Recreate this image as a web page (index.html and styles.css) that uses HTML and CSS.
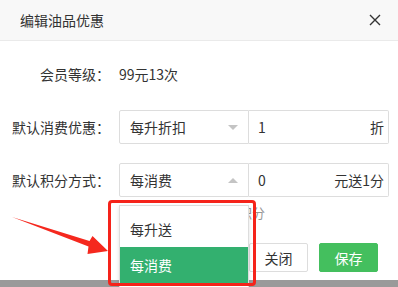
FILE: index.html
```html
<!DOCTYPE html>
<html lang="zh">
<head>
<meta charset="utf-8">
<link rel="stylesheet" href="styles.css">
</head>
<body>
<div class="dialog">
  <div class="header">
    <span class="title">编辑油品优惠</span>
    <svg class="close" width="12" height="12" viewBox="0 0 12 12"><path d="M1 1L11 11M11 1L1 11" stroke="#333" stroke-width="1.4" fill="none"/></svg>
  </div>
  <div class="body">
    <div class="row">
      <div class="label">会员等级：</div>
      <div class="value">99元13次</div>
    </div>
    <div class="row">
      <div class="label">默认消费优惠：</div>
      <div class="select"><span>每升折扣</span><i class="tri down"></i></div>
      <div class="input"><span>1</span><span class="unit">折</span></div>
    </div>
    <div class="row last">
      <div class="label">默认积分方式：</div>
      <div class="select"><span>每消费</span><i class="tri up"></i></div>
      <div class="input"><span>0</span><span class="unit">元送1分</span></div>
    </div>
    <div class="hint">每消费多少元可以送积分</div>
    <div class="footer">
      <button class="btn">关闭</button>
      <button class="btn primary">保存</button>
    </div>
  </div>
</div>
<div class="dropdown">
  <div class="item">每升送</div>
  <div class="item active">每消费</div>
</div>
<div class="mark"></div>
<svg class="arrow" width="398" height="287" viewBox="0 0 398 287"><polygon points="12,217 89.5,241 92.5,236 108,251 87.5,254 88.5,246.5" fill="#f5281e"/></svg>
</body>
</html>
```
FILE: styles.css
```css
html, body {
  margin: 0;
  padding: 0;
}
body {
  width: 398px;
  height: 287px;
  background: #9a9a9a;
  position: relative;
  overflow: hidden;
  font-family: "Noto Sans CJK SC", "Noto Sans", sans-serif;
  font-size: 14px;
  color: #333;
}
.dialog {
  width: 398px;
  height: 280px;
  background: #fff;
}
.header {
  height: 41px;
  box-sizing: border-box;
  background: #f8f8f8;
  border-bottom: 1px solid #eaeaea;
  padding: 0 17px 0 20px;
  display: flex;
  align-items: center;
  justify-content: space-between;
}
.title {
  font-size: 14px;
  color: #333;
}
.close {
  display: block;
}
.body {
  padding-top: 16px;
}
.row {
  display: flex;
  align-items: center;
  height: 34px;
  margin-bottom: 19px;
}
.row.last {
  margin-bottom: 0;
}
.label {
  width: 110px;
  text-align: right;
  margin-right: 9px;
  color: #333;
}
.select {
  width: 130px;
  height: 34px;
  box-sizing: border-box;
  border: 1px solid #ddd;
  border-radius: 2px 0 0 2px;
  display: flex;
  align-items: center;
  justify-content: space-between;
  padding: 0 10px 0 10px;
}
.tri {
  width: 0;
  height: 0;
  border-left: 5px solid transparent;
  border-right: 5px solid transparent;
}
.tri.down {
  border-top: 5px solid #c4c4c4;
}
.tri.up {
  border-bottom: 5px solid #c4c4c4;
}
.input {
  width: 140px;
  height: 34px;
  box-sizing: border-box;
  border: 1px solid #ddd;
  border-left: none;
  border-radius: 0 2px 2px 0;
  display: flex;
  align-items: center;
  justify-content: space-between;
  padding: 0 4px 0 9px;
}
.hint {
  margin-top: 8px;
  padding-left: 122px;
  font-size: 13px;
  line-height: 16px;
  color: #999;
}
.footer {
  display: flex;
  justify-content: flex-end;
  gap: 11px;
  padding-right: 20px;
  margin-top: 22px;
}
.btn {
  width: 59px;
  height: 29px;
  box-sizing: border-box;
  border: 1px solid #ddd;
  border-radius: 2px;
  background: #fff;
  font-family: inherit;
  font-size: 14px;
  color: #333;
  padding: 0;
}
.btn.primary {
  background: #44bf5e;
  border-color: #44bf5e;
  color: #fff;
}
.dropdown {
  position: absolute;
  left: 119px;
  top: 205px;
  width: 130px;
  box-sizing: border-box;
  border: 1px solid #ddd;
  background: #fff;
  padding: 5px 0;
  box-shadow: 0 2px 4px rgba(0,0,0,0.12);
}
.item {
  height: 36px;
  line-height: 36px;
  padding-left: 10px;
  color: #333;
}
.item.active {
  background: #33b06f;
  color: #fff;
}
.mark {
  position: absolute;
  left: 108px;
  top: 200px;
  width: 148px;
  height: 86px;
  box-sizing: border-box;
  border: 3px solid #f5231a;
  border-radius: 4px;
}
.arrow {
  position: absolute;
  left: 0;
  top: 0;
}
```
